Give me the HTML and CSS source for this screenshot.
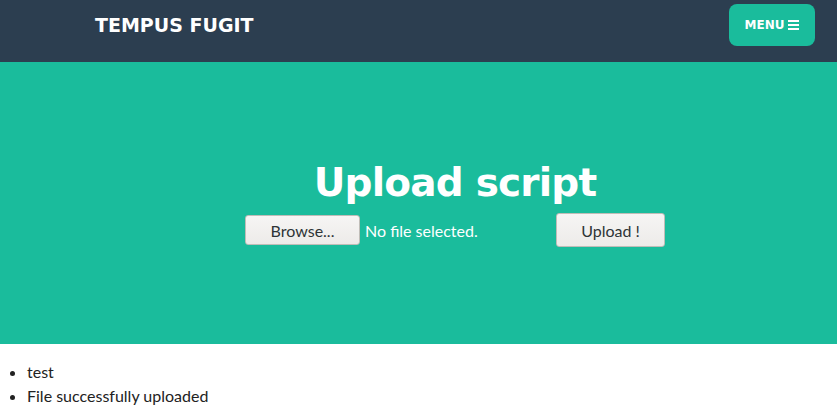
FILE: index.html
```html
<!DOCTYPE html>
<html lang="en">
<head>
<meta charset="utf-8">
<title>Tempus Fugit</title>
<link rel="stylesheet" href="styles.css">
</head>
<body>
<nav class="navbar">
  <a class="brand" href="#">TEMPUS FUGIT</a>
  <button class="menu" type="button">MENU <svg class="bars" width="11" height="10" viewBox="0 0 11 10"><rect x="0" y="0" width="11" height="2"/><rect x="0" y="4" width="11" height="2"/><rect x="0" y="8" width="11" height="2"/></svg></button>
</nav>
<header class="hero">
  <div class="hero-inner">
    <h1 class="title">Upload script</h1>
    <form class="upload-form">
      <div class="file-input">
        <span class="browse">Browse...</span>
        <span class="file-label">No file selected.</span>
      </div>
      <button class="upload" type="button">Upload !</button>
    </form>
  </div>
</header>
<ul class="messages">
  <li>test</li>
  <li>File successfully uploaded</li>
</ul>
</body>
</html>
```
FILE: styles.css
```css
html, body {
  margin: 0;
  padding: 0;
  background: #fff;
  font-family: Lato, "Open Sans", sans-serif;
  color: #2c3e50;
}
.navbar {
  height: 62px;
  background: #2c3e50;
  display: flex;
  align-items: flex-start;
  justify-content: space-between;
  padding: 0 22px 0 95px;
  box-sizing: border-box;
}
.brand {
  font-family: "DejaVu Sans", sans-serif;
  font-weight: 700;
  font-size: 19px;
  color: #fff;
  text-decoration: none;
  line-height: 24px;
  margin-top: 13px;
}
.menu {
  margin-top: 4px;
  width: 86px;
  height: 42px;
  border: 0;
  border-radius: 8px;
  background: #1abc9c;
  color: #fff;
  font-family: "DejaVu Sans", sans-serif;
  font-weight: 700;
  font-size: 12px;
  display: flex;
  align-items: center;
  justify-content: center;
  gap: 4px;
  padding: 0;
}
.bars { fill: #fff; }
.hero {
  height: 282px;
  background: #1abc9c;
  box-sizing: border-box;
  padding: 98px 0 0 73px;
}
.hero-inner {
  display: flex;
  flex-direction: column;
  align-items: center;
}
.title {
  margin: 0;
  font-family: "DejaVu Sans", sans-serif;
  font-weight: 700;
  font-size: 39px;
  letter-spacing: -0.8px;
  line-height: 46px;
  color: #fff;
}
.upload-form {
  display: flex;
  align-items: center;
  gap: 4px;
  margin-top: 7px;
}
.file-input {
  width: 307px;
  display: flex;
  align-items: center;
  gap: 5px;
}
.browse, .upload {
  box-sizing: border-box;
  background: linear-gradient(#f6f5f4, #edebe9);
  border: 1px solid #c0bdb8;
  border-radius: 3px;
  color: #2e3436;
  font-family: Lato, sans-serif;
  font-size: 16px;
  display: flex;
  align-items: center;
  justify-content: center;
}
.browse {
  width: 115px;
  height: 30px;
}
.file-label {
  color: #fff;
  font-size: 16px;
}
.upload {
  width: 109px;
  height: 34px;
  padding: 0;
}
.messages {
  margin: 0;
  padding: 16px 0 0 27px;
  font-size: 16px;
  line-height: 24px;
  color: #222;
}
```
